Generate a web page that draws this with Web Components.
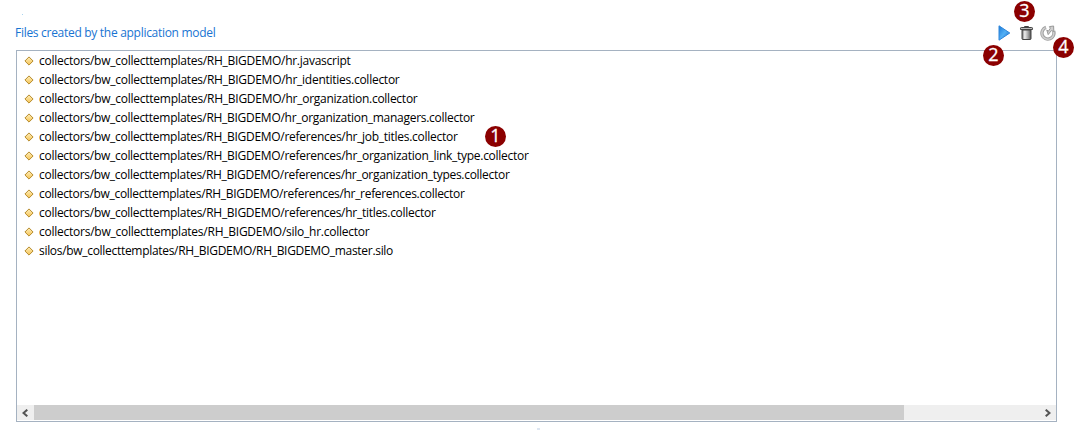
<!DOCTYPE html>
<html lang="en">
<head>
<meta charset="utf-8">
<title>Application model files</title>
<style>
html, body { margin: 0; height: 430px; overflow: hidden; background: #fff; }
body { font-family: "Open Sans", "Noto Sans", sans-serif; font-size: 12px; color: #000; }
</style>
</head>
<body>
<files-panel></files-panel>
<script>
const define = (name, html, init) => customElements.define(name, class extends HTMLElement {
  constructor() {
    super();
    this.attachShadow({ mode: "open" }).innerHTML = html;
  }
  connectedCallback() { if (init) init.call(this, this.shadowRoot); }
});

// One line of text, tracked so that it fills the width given in pixels.
define("fit-text", `<style>
:host { display: block; white-space: pre; line-height: 19px; }
span { display: inline-block; }
</style><span><slot></slot></span>`, function (root) {
  const span = root.querySelector("span");
  const spare = Number(this.getAttribute("width")) - span.getBoundingClientRect().width;
  span.style.letterSpacing = spare / this.textContent.length + "px";
});

define("file-row", `<style>
:host { display: flex; align-items: center; height: 19px; padding-left: 7px; gap: 5px; }
svg { width: 10px; height: 10px; flex: none; }
</style>
<svg viewBox="0 0 10 10"><defs><linearGradient id="g" x2="0" y2="1"><stop stop-color="#fff0bd"/><stop offset="1" stop-color="#f5c252"/></linearGradient></defs>
<path d="M5 .9 9.1 5 5 9.1.9 5Z" fill="url(#g)" stroke="#b68a2c" stroke-width="1"/></svg>
<slot></slot>`);

define("callout-badge", `<style>
:host { position: absolute; box-sizing: border-box; padding-bottom: 2px; display: flex; align-items: center; justify-content: center; width: 21px; height: 21px;
  border-radius: 50%; background: #8b0000; color: #fff; font: 18px/19px "Open Sans", sans-serif; z-index: 2; -webkit-text-stroke: .3px #fff; }
</style><slot></slot>`);

define("tool-bar", `<style>
:host { display: flex; gap: 6px; height: 16px; }
svg { width: 16px; height: 16px; display: block; }
</style>
<svg viewBox="0 0 16 16"><defs><linearGradient id="p" x2="1" y2="1"><stop stop-color="#1c78d6"/><stop offset=".5" stop-color="#52b0f5"/><stop offset="1" stop-color="#1767c5"/></linearGradient></defs>
<path d="M3 .8 13.8 8 3 15.2Z" fill="url(#p)" stroke="#2f86da" stroke-width="1" stroke-linejoin="round"/></svg>
<svg viewBox="0 0 16 16"><defs><linearGradient id="t"><stop stop-color="#666"/><stop offset=".3" stop-color="#eee"/><stop offset=".65" stop-color="#aaa"/><stop offset="1" stop-color="#555"/></linearGradient></defs>
<path d="M6.5 2.5V1.5H10.5V2.5" fill="none" stroke="#444"/><path d="M2.5 4.5V3.2Q2.5 2.5 3.3 2.5H13.7Q14.5 2.5 14.5 3.2V4.5Z" fill="#bbb" stroke="#444"/>
<path d="M4 5H13V13.7Q13 14.5 12 14.5H5Q4 14.5 4 13.7Z" fill="url(#t)" stroke="#444"/></svg>
<svg viewBox="0 0 16 16"><path d="M6 2.4A6 6 0 1 0 13.6 6" fill="none" stroke="#a2a2a2" stroke-width="3.4"/><path d="M5.6 2.6A6 6 0 1 0 13.6 6.6" fill="none" stroke="#cfcfcf" stroke-width="1.5"/>
<path d="M6.8 5 8.2 9.6 11.3 5.6 13.8 6.4 13.6 1 9.4 1.6 10.3 3.2 8.4 6.2Z" fill="#cfcfcf" stroke="#999" stroke-width="1"/></svg>`);

define("scroll-bar", `<style>
:host { display: flex; height: 15px; background: #efefef; }
.end { width: 17px; display: flex; align-items: center; justify-content: center; }
.track { flex: 1; }
.thumb { width: 870px; height: 15px; background: #cdcdcd; }
svg { width: 7px; height: 8px; display: block; }
path { fill: none; stroke: #555; stroke-width: 2; }
</style>
<div class="end"><svg viewBox="0 0 7 8"><path d="M5.3.7 1.5 4 5.3 7.3"/></svg></div>
<div class="track"><div class="thumb"></div></div>
<div class="end"><svg viewBox="0 0 7 8"><path d="M1.7.7 5.5 4 1.7 7.3"/></svg></div>`);

const files = [
  ["collectors/bw_collecttemplates/RH_BIGDEMO/hr.javascript", 311.5],
  ["collectors/bw_collecttemplates/RH_BIGDEMO/hr_identities.collector", 360.5],
  ["collectors/bw_collecttemplates/RH_BIGDEMO/hr_organization.collector", 378.5],
  ["collectors/bw_collecttemplates/RH_BIGDEMO/hr_organization_managers.collector", 435.5],
  ["collectors/bw_collecttemplates/RH_BIGDEMO/references/hr_job_titles.collector", 418.5],
  ["collectors/bw_collecttemplates/RH_BIGDEMO/references/hr_organization_link_type.collector", 489.5],
  ["collectors/bw_collecttemplates/RH_BIGDEMO/references/hr_organization_types.collector", 470.5],
  ["collectors/bw_collecttemplates/RH_BIGDEMO/references/hr_references.collector", 425.5],
  ["collectors/bw_collecttemplates/RH_BIGDEMO/references/hr_titles.collector", 396.5],
  ["collectors/bw_collecttemplates/RH_BIGDEMO/silo_hr.collector", 330.5],
  ["silos/bw_collecttemplates/RH_BIGDEMO/RH_BIGDEMO_master.silo", 354]
];

define("files-panel", `<style>
:host { display: block; position: relative; width: 1076px; height: 430px; box-sizing: border-box; padding: 23px 20px 0 15px; }
header { display: flex; justify-content: space-between; height: 27px; color: #1874d2; }
tool-bar { padding-top: 2px; }
.list { box-sizing: border-box; width: 1041px; height: 372px; margin-left: 1px; border: 1px solid #a5b2c1;
  display: flex; flex-direction: column; padding-bottom: 1px; }
.rows { flex: 1; }
.speck { position: absolute; height: 1px; }
</style>
<i class="speck" style="left:22px;top:14px;width:1px;background:#a9d4f0"></i>
<i class="speck" style="left:537px;top:428px;width:3px;height:2px;background:#dde6f2"></i>
<header><fit-text width="200.5">Files created by the application model</fit-text><tool-bar></tool-bar></header>
<div class="list"><div class="rows">${files.map(([name, width]) => `<file-row><fit-text width="${width}">${name}</fit-text></file-row>`).join("")}</div>
<scroll-bar></scroll-bar></div>
<callout-badge style="left:485px;top:126px">1</callout-badge>
<callout-badge style="left:983px;top:45px">2</callout-badge>
<callout-badge style="left:1014px;top:1px">3</callout-badge>
<callout-badge style="left:1053px;top:37px">4</callout-badge>`);
</script>
</body>
</html>
